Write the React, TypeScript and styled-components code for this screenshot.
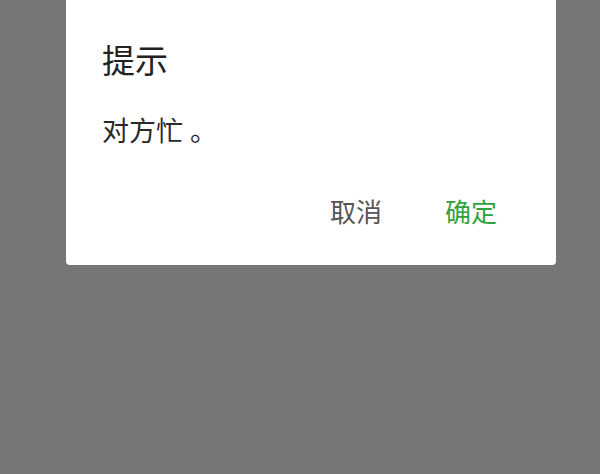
import styled, { createGlobalStyle } from 'styled-components';

const GlobalStyle = createGlobalStyle`
  html, body {
    margin: 0;
    padding: 0;
    background: #767676;
  }
  body {
    width: 600px;
    height: 474px;
    overflow: hidden;
    font-family: "Noto Sans CJK SC", "Noto Sans", sans-serif;
  }
`;

const Overlay = styled.div`
  width: 600px;
  height: 474px;
  background: #767676;
  display: flex;
  align-items: flex-start;
  padding-left: 66px;
  box-sizing: border-box;
`;

const Dialog = styled.div`
  width: 490px;
  height: 265px;
  background: #ffffff;
  border-radius: 0 0 4px 4px;
  box-sizing: border-box;
  padding: 42px 36px 0 36px;
  display: flex;
  flex-direction: column;
`;

const Title = styled.div`
  font-size: 33px;
  line-height: 34px;
  color: #222222;
`;

const Message = styled.div`
  margin-top: 40px;
  font-size: 27px;
  line-height: 28px;
  color: #2a2a2a;
`;

const Stop = styled.span`
  margin-left: 7px;
`;

const Actions = styled.div`
  margin-top: 54px;
  display: flex;
  justify-content: flex-end;
  gap: 63px;
  padding-right: 23px;
`;

const ActionButton = styled.button<{ $primary?: boolean }>`
  border: none;
  background: none;
  padding: 0;
  font-family: inherit;
  font-size: 26px;
  line-height: 26px;
  color: ${(p) => (p.$primary ? '#2ea33d' : '#555555')};
  cursor: pointer;
`;

const App = () => {
  return (
    <>
      <GlobalStyle />
      <Overlay>
        <Dialog>
          <Title>提示</Title>
          <Message>
            对方忙<Stop>。</Stop>
          </Message>
          <Actions>
            <ActionButton>取消</ActionButton>
            <ActionButton $primary>确定</ActionButton>
          </Actions>
        </Dialog>
      </Overlay>
    </>
  );
};

export default App;
